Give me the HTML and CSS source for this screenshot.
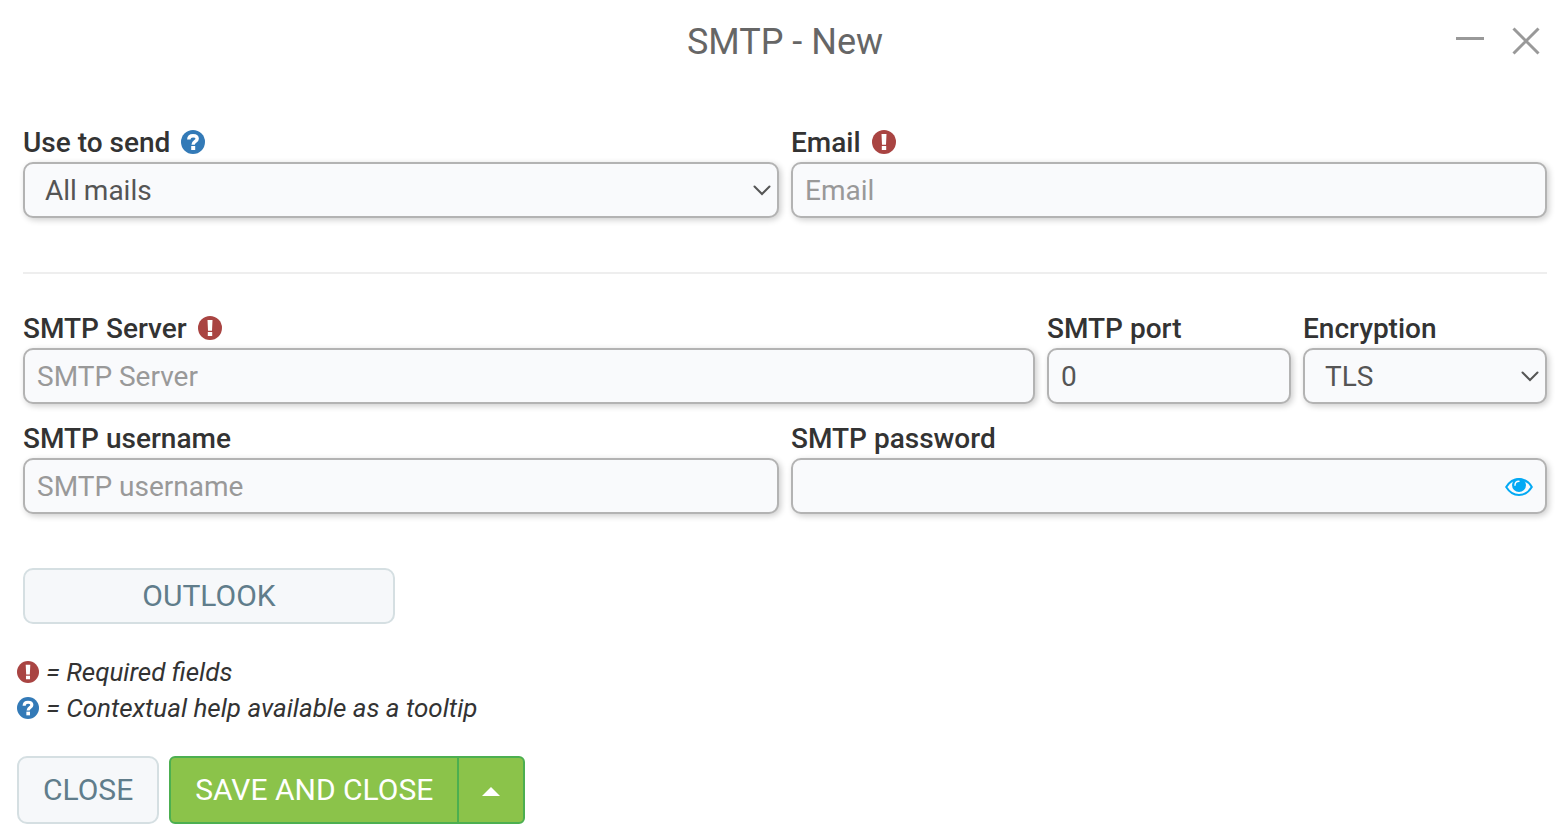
FILE: index.html
```html
<!DOCTYPE html>
<html lang="en">
<head>
    <meta charset="UTF-8">
    <meta name="viewport" content="width=device-width, initial-scale=1.0">
    <title>SMTP - New</title>
    <link rel="stylesheet" href="styles.css">
</head>
<body>

<svg class="sprite" aria-hidden="true">
    <symbol id="icon-help" viewBox="0 0 24 24">
        <circle cx="12" cy="12" r="12" fill="#337ab7"/>
        <path d="M7.800 9.600C7.800 7 9.300 5.700 12 5.700s4.200 1.100 4.200 3.100c0 2.700-4.100 2.700-4.100 5.900" fill="none" stroke="#fff" stroke-width="3.400"/>
        <path d="M10.200 16h4v4h-4z" fill="#fff"/>
    </symbol>
    <symbol id="icon-required" viewBox="0 0 24 24">
        <circle cx="12" cy="12" r="12" fill="#a94442"/>
        <path d="M9.500 4h5l-.5 10.800h-4zM9.800 16h4.400v4H9.800z" fill="#fff"/>
    </symbol>
</svg>

<header class="modal-header">
    <h1>SMTP - New</h1>
    <div class="window-buttons">
        <button type="button" aria-label="Minimize">
            <svg width="28" height="28" viewBox="0 0 28 28"><path d="M0 11.500h28" stroke="#999" stroke-width="3"/></svg>
        </button>
        <button type="button" aria-label="Close window">
            <svg width="28" height="28" viewBox="0 0 28 28"><path d="M1.500 1.500l25 25M26.500 1.500l-25 25" stroke="#999" stroke-width="3"/></svg>
        </button>
    </div>
</header>

<form id="smtpForm">
    <div class="form-grid">
        <div class="field col-6">
            <label for="useToSend">Use to send <svg class="icon"><use href="#icon-help"/></svg></label>
            <div class="select-wrap">
                <select id="useToSend" name="useToSend">
                    <option>All mails</option>
                </select>
                <svg class="chevron" viewBox="0 0 18 12"><path d="M1.500 2.500l7.500 7.500L16.500 2.500" fill="none" stroke="#555" stroke-width="2" stroke-linecap="round"/></svg>
            </div>
        </div>
        <div class="field col-6">
            <label for="email">Email <svg class="icon"><use href="#icon-required"/></svg></label>
            <input type="email" id="email" name="email" placeholder="Email">
        </div>
    </div>

    <hr>

    <div class="form-grid">
        <div class="field col-8">
            <label for="server">SMTP Server <svg class="icon"><use href="#icon-required"/></svg></label>
            <input type="text" id="server" name="server" placeholder="SMTP Server">
        </div>
        <div class="field col-2">
            <label for="port">SMTP port</label>
            <input type="text" id="port" name="port" value="0">
        </div>
        <div class="field col-2">
            <label for="encryption">Encryption</label>
            <div class="select-wrap">
                <select id="encryption" name="encryption">
                    <option>TLS</option>
                </select>
                <svg class="chevron" viewBox="0 0 18 12"><path d="M1.500 2.500l7.500 7.500L16.500 2.500" fill="none" stroke="#555" stroke-width="2" stroke-linecap="round"/></svg>
            </div>
        </div>
        <div class="field col-6">
            <label for="username">SMTP username</label>
            <input type="text" id="username" name="username" placeholder="SMTP username">
        </div>
        <div class="field col-6">
            <label for="password">SMTP password</label>
            <div class="password-wrap">
                <input type="password" id="password" name="password">
                <button type="button" class="show-password" aria-label="Show password">
                    <svg width="28" height="18" viewBox="0 0 28 18">
                        <path d="M1.200 9C4.500 3.600 9 1 14 1S23.500 3.600 26.800 9C23.500 14.400 19 17 14 17S4.500 14.400 1.200 9z" fill="none" stroke="#03a9f4" stroke-width="2"/>
                        <circle cx="14" cy="7" r="7" fill="#03a9f4"/>
                        <path d="M10 7.200c0-2.500 1.500-4 4-4" fill="none" stroke="#fff" stroke-width="1.400" stroke-linecap="round"/>
                    </svg>
                </button>
            </div>
        </div>
    </div>

    <div class="form-grid provider">
        <button type="button" class="btn btn-outlook col-3">OUTLOOK</button>
    </div>
</form>

<div class="legend">
    <p><svg class="icon"><use href="#icon-required"/></svg> = Required fields</p>
    <p><svg class="icon"><use href="#icon-help"/></svg> = Contextual help available as a tooltip</p>
</div>

<footer class="modal-footer">
    <button type="button" class="btn">CLOSE</button>
    <div class="btn-group">
        <button type="submit" form="smtpForm" class="btn btn-save">SAVE AND CLOSE</button>
        <button type="button" class="btn btn-save btn-caret" aria-label="More save options">
            <svg width="18" height="9" viewBox="0 0 18 9"><path d="M0 9L9 0l9 9z" fill="#fff"/></svg>
        </button>
    </div>
</footer>

</body>
</html>
```

FILE: styles.css
```css
* {
    box-sizing: border-box;
}
body {
    margin: 0;
    background: #fff;
    color: #333;
    font-family: Roboto, Arial, sans-serif;
    font-size: 28px;
}
button, input, select {
    font-family: inherit;
    font-size: inherit;
}
button {
    cursor: pointer;
}
svg {
    display: block;
}
.sprite {
    position: absolute;
    width: 0;
    height: 0;
}
.modal-header {
    display: grid;
    grid-template-columns: 1fr auto 1fr;
    align-items: center;
    height: 82px;
    padding: 0 22px 0 30px;
}
.modal-header h1 {
    grid-column: 2;
    margin: 0;
    padding-top: 2px;
    color: #666;
    font-size: 36px;
    font-weight: 400;
}
.window-buttons {
    display: flex;
    justify-content: flex-end;
    gap: 28px;
}
.window-buttons button {
    padding: 0;
    border: 0;
    background: none;
}
form {
    padding: 40px 15px 0 23px;
}
.form-grid {
    display: grid;
    grid-template-columns: repeat(12, 1fr);
    gap: 14px 12px;
}
.col-2 { grid-column: span 2; }
.col-3 { grid-column: span 3; }
.col-6 { grid-column: span 6; }
.col-8 { grid-column: span 8; }
label {
    display: flex;
    align-items: center;
    gap: 11px;
    height: 40px;
    font-weight: 500;
}
.icon {
    width: 24px;
    height: 24px;
}
input, select {
    display: block;
    width: 100%;
    height: 56px;
    padding: 0 12px;
    border: 2px solid #b3b3b3;
    border-radius: 10px;
    background: #f9fafc;
    box-shadow: 2px 2px 6px rgba(0, 0, 0, 0.2);
    color: #555;
}
input::placeholder {
    color: #999;
}
select {
    appearance: none;
    padding: 0 20px;
}
.select-wrap, .password-wrap {
    position: relative;
}
.chevron {
    position: absolute;
    top: 22px;
    right: 8px;
    width: 18px;
    height: 12px;
    pointer-events: none;
}
.show-password {
    position: absolute;
    top: 20px;
    right: 14px;
    padding: 0;
    border: 0;
    background: none;
}
hr {
    height: 2px;
    margin: 54px 0 34px;
    border: 0;
    background: #eee;
}
.provider {
    margin-top: 54px;
}
.btn {
    height: 68px;
    padding: 0 24px 2px;
    border: 2px solid #d5dfe2;
    border-radius: 10px;
    background: #f6f8fa;
    color: #607d8b;
    font-size: 30px;
}
.btn-outlook {
    height: 56px;
}
.legend {
    padding: 30px 17px 0;
    font-size: 26px;
    font-style: italic;
}
.legend p {
    display: flex;
    align-items: center;
    gap: 7px;
    height: 36px;
    margin: 0;
}
.legend .icon {
    width: 22px;
    height: 22px;
}
.modal-footer {
    display: flex;
    gap: 10px;
    padding: 30px 17px 13px;
}
.btn-group {
    display: flex;
}
.btn-save {
    border-color: #4caf50;
    border-radius: 6px 0 0 6px;
    background: #8bc34a;
    color: #fff;
}
.btn-caret {
    margin-left: -2px;
    padding: 2px 23px 0;
    border-radius: 0 6px 6px 0;
}
```
